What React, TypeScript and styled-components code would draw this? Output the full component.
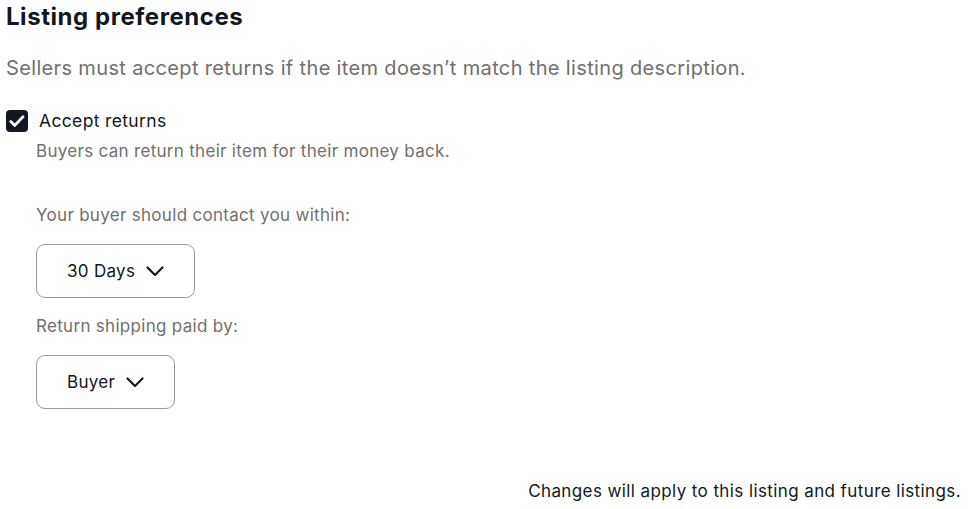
import React from 'react';
import styled, { createGlobalStyle } from 'styled-components';

const GlobalStyle = createGlobalStyle`
  body {
    margin: 0;
    background: #ffffff;
    font-family: Inter, "Noto Sans", sans-serif;
    color: #111820;
  }
`;

interface SelectProps {
    value: string;
}

const Chevron = () => (
    <svg width="20" height="20" viewBox="0 0 20 20" fill="none">
        <path d="M2.5 6.5l7.5 7.5 7.5-7.5" stroke="#111820" strokeWidth="2.2" strokeLinecap="round" strokeLinejoin="round" />
    </svg>
);

const Select: React.FC<SelectProps> = ({ value }) => (
    <SelectButton>
        <span>{value}</span>
        <Chevron />
    </SelectButton>
);

const App = () => {
    return (
        <Page>
            <GlobalStyle />
            <Title>Listing preferences</Title>
            <Intro>Sellers must accept returns if the item doesn’t match the listing description.</Intro>

            <CheckRow>
                <CheckBox>
                    <svg width="22" height="22" viewBox="0 0 22 22" fill="none">
                        <path d="M4.8 11.4l4 4 8.2-8.6" stroke="#ffffff" strokeWidth="2.8" strokeLinecap="round" strokeLinejoin="round" />
                    </svg>
                </CheckBox>
                <CheckLabel>Accept returns</CheckLabel>
            </CheckRow>

            <Options>
                <Hint>Buyers can return their item for their money back.</Hint>
                <Field>
                    <FieldLabel>Your buyer should contact you within:</FieldLabel>
                    <Select value="30 Days" />
                </Field>
                <Field>
                    <FieldLabel>Return shipping paid by:</FieldLabel>
                    <Select value="Buyer" />
                </Field>
            </Options>

            <Footer>Changes will apply to this listing and future listings.</Footer>
        </Page>
    );
};

export default App;

const Page = styled.div`
  width: 969px;
  height: 509px;
  box-sizing: border-box;
  padding: 0 8px 0 6px;
  display: flex;
  flex-direction: column;
`;

const Title = styled.h2`
  margin: 2px 0 0 0;
  font-size: 24px;
  line-height: 30px;
  letter-spacing: 0.55px;
  font-weight: 700;
  color: #111820;
`;

const Intro = styled.p`
  margin: 22px 0 0 0;
  font-size: 20px;
  line-height: 28px;
  letter-spacing: 0.35px;
  color: #707070;
`;

const CheckRow = styled.div`
  display: flex;
  align-items: center;
  gap: 11px;
  margin-top: 27px;
`;

const CheckBox = styled.div`
  width: 22px;
  height: 22px;
  border-radius: 4px;
  background: #111820;
  display: flex;
  align-items: center;
  justify-content: center;
`;

const CheckLabel = styled.span`
  font-size: 17.5px;
  line-height: 24px;
  letter-spacing: 0.35px;
  color: #111820;
`;

const Options = styled.div`
  padding-left: 30px;
  display: flex;
  flex-direction: column;
`;

const Hint = styled.div`
  margin-top: 7px;
  font-size: 17px;
  line-height: 22px;
  letter-spacing: 0.3px;
  color: #707070;
`;

const Field = styled.div`
  display: flex;
  flex-direction: column;
  align-items: flex-start;
  margin-top: 42px;

  & + & {
    margin-top: 17px;
  }
`;

const FieldLabel = styled.div`
  font-size: 17px;
  line-height: 22px;
  letter-spacing: 0.3px;
  color: #707070;
`;

const SelectButton = styled.div`
  margin-top: 18px;
  height: 54px;
  box-sizing: border-box;
  padding: 0 29px 0 30px;
  border: 1px solid #999999;
  border-radius: 9px;
  display: flex;
  align-items: center;
  gap: 10px;
  font-size: 17px;
  letter-spacing: 0.3px;
  color: #111820;
`;

const Footer = styled.div`
  margin-top: auto;
  margin-bottom: 7px;
  align-self: flex-end;
  font-size: 17px;
  line-height: 22px;
  letter-spacing: 0.4px;
  color: #111820;
`;
